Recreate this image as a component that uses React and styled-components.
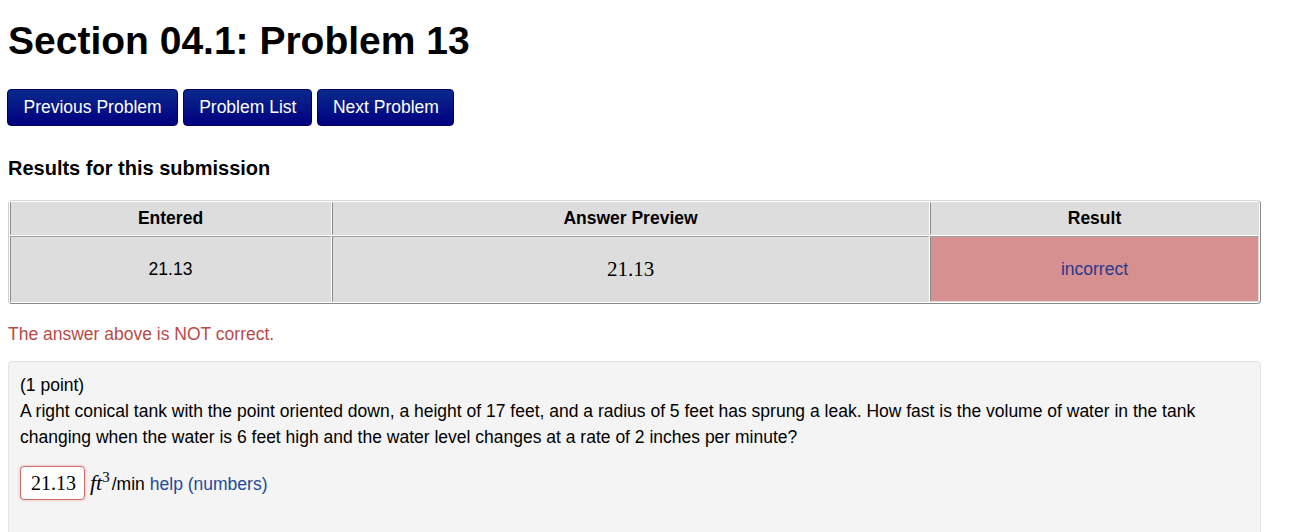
import React from 'react'
import styled, { createGlobalStyle } from 'styled-components'

const GlobalStyle = createGlobalStyle`
  body {
    margin: 0;
    background: #fff;
    font-family: "Liberation Sans", Arial, sans-serif;
    color: #000;
  }
`;

const Page = styled.div`
  width: 1253px;
  padding: 0 8px;
  overflow: hidden;
  height: 532px;
`;

const Title = styled.h1`
  font-size: 39px;
  line-height: 40px;
  font-weight: bold;
  margin: 21px 0 28px;
`;

const NavBar = styled.div`
  display: flex;
  gap: 5px;
  margin-left: -1px;
`;

const NavButton = styled.button`
  font-family: "Liberation Sans", Arial, sans-serif;
  font-size: 17.5px;
  line-height: 19px;
  color: #fff;
  padding: 8px ${(p) => p.$px}px;
  border: 1px solid #00005e;
  border-radius: 4px;
  background: linear-gradient(#0a2a8c, #000080);
  cursor: pointer;
`;

const SubHeading = styled.h3`
  font-size: 20px;
  line-height: 22px;
  font-weight: bold;
  margin: 31px 0 21px;
`;

const Results = styled.table`
  width: 1253px;
  table-layout: fixed;
  border-collapse: separate;
  border-spacing: 1px;
  border: 1px solid;
  border-color: #d8d8d8 #8a8a8a #8a8a8a #cfcfcf;
  border-radius: 4px;
  font-size: 17.5px;
`;

const Cell = styled.td`
  background: ${(p) => (p.$bad ? '#d69090' : '#dddddd')};
  color: ${(p) => (p.$bad ? '#27398a' : '#000')};
  border: 1px solid;
  border-color: #a0a0a0 #dddddd #dddddd #8a8a8a;
  text-align: center;
  height: 64px;
  padding: 0;
  font-family: ${(p) => (p.$math ? '"Liberation Serif", "Times New Roman", serif' : 'inherit')};
  font-size: ${(p) => (p.$math ? '21px' : '17.5px')};
`;

const HeadCell = styled.th`
  background: #dddddd;
  border: 1px solid;
  border-color: #dddddd #dddddd #dddddd #8a8a8a;
  font-weight: bold;
  height: 31px;
  padding: 0;
`;

const ErrorNote = styled.div`
  color: #b94a48;
  font-size: 17.5px;
  line-height: 20px;
  margin: 20px 0 17px;
`;

const Well = styled.div`
  background: #f4f4f4;
  border: 1px solid #e3e3e3;
  border-radius: 4px;
  padding: 10px 11px 60px;
  font-size: 17.5px;
  line-height: 26px;
`;

const AnswerRow = styled.div`
  display: flex;
  align-items: center;
  margin-top: 16px;
  gap: 5px;
`;

const AnswerInput = styled.input`
  width: 45px;
  height: 32px;
  padding: 0 8px 0 10px;
  border: 1px solid #d46a6a;
  border-radius: 4px;
  box-shadow: 0 0 3px rgba(200, 80, 80, 0.45);
  background: #fff;
  font-family: "Liberation Serif", "Times New Roman", serif;
  font-size: 20px;
  color: #000;
  text-align: left;
`;

const Units = styled.span`
  display: flex;
  align-items: baseline;
  white-space: nowrap;
`;

const MathVar = styled.span`
  font-family: "Liberation Serif", "Times New Roman", serif;
  font-style: italic;
  font-size: 22px;
  margin-right: 2px;
  sup {
    font-style: normal;
    font-size: 15px;
    vertical-align: 8px;
    line-height: 0;
  }
`;

const HelpLink = styled.a`
  color: #1c4c98;
  text-decoration: none;
  margin-left: 5px;
`;

const App = () => {
  return (
    <Page>
      <GlobalStyle />
      <Title>Section 04.1: Problem 13</Title>
      <NavBar>
        <NavButton $px={15.5}>Previous Problem</NavButton>
        <NavButton $px={15}>Problem List</NavButton>
        <NavButton $px={14.5}>Next Problem</NavButton>
      </NavBar>

      <SubHeading>Results for this submission</SubHeading>

      <Results>
        <colgroup>
          <col style={{ width: 321 }} />
          <col style={{ width: 597 }} />
          <col />
        </colgroup>
        <thead>
          <tr>
            <HeadCell>Entered</HeadCell>
            <HeadCell>Answer Preview</HeadCell>
            <HeadCell>Result</HeadCell>
          </tr>
        </thead>
        <tbody>
          <tr>
            <Cell>21.13</Cell>
            <Cell $math>21.13</Cell>
            <Cell $bad>incorrect</Cell>
          </tr>
        </tbody>
      </Results>

      <ErrorNote>The answer above is NOT correct.</ErrorNote>

      <Well>
        <div>(1 point)</div>
        <div>
          A right conical tank with the point oriented down, a height of 17 feet, and a radius of 5 feet has
          sprung a leak. How fast is the volume of water in the tank changing when the water is 6 feet high
          and the water level changes at a rate of 2 inches per minute?
        </div>
        <AnswerRow>
          <AnswerInput defaultValue="21.13" />
          <Units>
            <MathVar>
              ft<sup>3</sup>
            </MathVar>
            /min
            <HelpLink href="#">help (numbers)</HelpLink>
          </Units>
        </AnswerRow>
      </Well>
    </Page>
  )
}

export default App
